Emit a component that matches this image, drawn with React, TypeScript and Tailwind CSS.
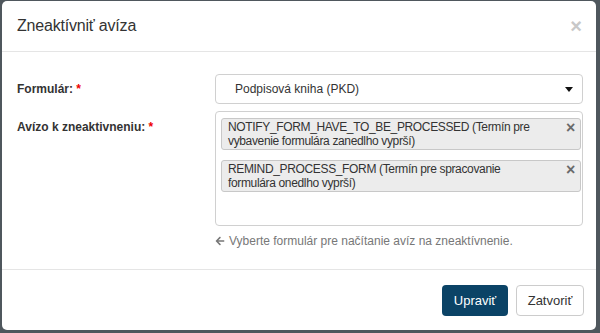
import React from "react";
import { FaArrowLeft } from "react-icons/fa";

function Tag({ children }: { children: React.ReactNode }) {
  return (
    <div className="relative rounded-[3px] border border-[#c8c8c8] bg-[#ececec] pl-[6px] pr-[22px] py-[1px] text-[12px] leading-[14px] tracking-[-0.35px] text-[#333]">
      {children}
      <span className="absolute right-[5px] top-[1px] text-[16px] font-bold leading-[16px] text-[#6a6a6a]">×</span>
    </div>
  );
}

export default function App() {
  return (
    <div
      className="h-[333px] w-[600px] bg-[#4f575d] pt-[1px] pl-[2px] pr-[4px] pb-[3px]"
      style={{ fontFamily: '"Liberation Sans", Arial, sans-serif' }}
    >
      <div className="flex h-full flex-col rounded-[5px] bg-white">
        <div className="flex h-[51px] items-center justify-between border-b border-[#e5e5e5] pl-[15px] pr-[14px]">
          <div className="text-[16px] tracking-[-0.2px] text-[#333]">Zneaktívniť avíza</div>
          <span className="text-[20px] font-bold leading-none text-[#c8c8c8]">×</span>
        </div>
        <div className="flex flex-1 flex-col gap-[7px] border-b border-[#e5e5e5] pl-[15px] pr-[13px] pt-[22px]">
          <div className="flex">
            <div className="w-[198px] pt-[8px] text-[12px] font-bold leading-[14px] text-[#333]">
              Formulár: <span className="text-[#e00]">*</span>
            </div>
            <div className="relative flex h-[30px] flex-1 items-center rounded-[4px] border border-[#d0d0d0] pl-[19px] text-[12px] text-[#333]">
              Podpisová kniha (PKD)
              <svg className="absolute right-[9px] top-[12px]" width="8" height="5" viewBox="0 0 8 5">
                <path d="M0 0 L8 0 L4 5 Z" fill="#111" />
              </svg>
            </div>
          </div>
          <div className="flex">
            <div className="w-[198px] pt-[9px] text-[12px] font-bold leading-[14px] text-[#333]">
              Avízo k zneaktivneniu: <span className="text-[#e00]">*</span>
            </div>
            <div className="flex-1">
              <div className="flex h-[115px] flex-col gap-[10px] rounded-[4px] border border-[#d0d0d0] pl-[5px] pr-[1px] pt-[6px]">
                <Tag>
                  NOTIFY_FORM_HAVE_TO_BE_PROCESSED (Termín pre
                  <br />
                  vybavenie formulára zanedlho vyprší)
                </Tag>
                <Tag>
                  REMIND_PROCESS_FORM (Termín pre spracovanie
                  <br />
                  formulára onedlho vyprší)
                </Tag>
              </div>
              <div className="mt-[7px] flex items-center gap-[4px] text-[12px] leading-[16px] text-[#777]">
                <FaArrowLeft size={10} />
                <span>Vyberte formulár pre načítanie avíz na zneaktívnenie.</span>
              </div>
            </div>
          </div>
        </div>
        <div className="flex h-[60px] items-start justify-end gap-[8px] pr-[12px] pt-[15px]">
          <button className="h-[31px] w-[66px] rounded-[4px] bg-[#0b4366] text-[13px] text-white">Upraviť</button>
          <button className="h-[31px] w-[68px] rounded-[4px] border border-[#ccc] bg-white text-[13px] text-[#333]">Zatvoriť</button>
        </div>
      </div>
    </div>
  );
}
